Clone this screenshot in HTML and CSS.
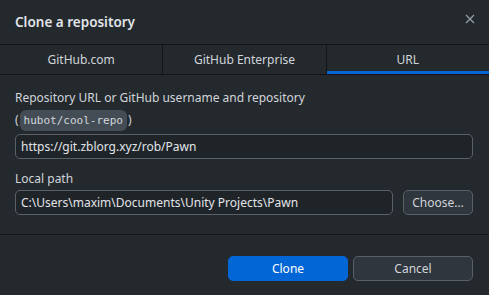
FILE: index.html
```html
<!DOCTYPE html>
<html lang="en">
<head>
    <meta charset="UTF-8">
    <title>Clone a repository</title>
    <link rel="stylesheet" href="styles.css">
</head>
<body>
    <div class="dialog">
        <div class="dialog-header">
            <h1>Clone a repository</h1>
            <button class="close-button" aria-label="Close">
                <svg width="10" height="10" viewBox="0 0 10 10">
                    <path d="M1 1L9 9M9 1L1 9" stroke="#959da5" stroke-width="1.3"/>
                </svg>
            </button>
        </div>
        <div class="tabs">
            <div class="tab">GitHub.com</div>
            <div class="tab">GitHub Enterprise</div>
            <div class="tab selected">URL</div>
        </div>
        <div class="dialog-content">
            <label class="field-label">Repository URL or GitHub username and repository<br>(<code>hubot/cool-repo</code>)</label>
            <input class="text-input" type="text" value="https://git.zblorg.xyz/rob/Pawn">

            <label class="field-label path-label">Local path</label>
            <div class="path-row">
                <input class="text-input" type="text" value="C:\Users\maxim\Documents\Unity Projects\Pawn">
                <button class="button choose">Choose…</button>
            </div>
        </div>
        <div class="dialog-footer">
            <button class="button primary">Clone</button>
            <button class="button">Cancel</button>
        </div>
    </div>
</body>
</html>
```

FILE: styles.css
```css
body {
    margin: 0;
    background-color: #24292e;
    font-family: "Noto Sans", "Open Sans", sans-serif;
    font-size: 12px;
    color: #d1d5da;
}
.dialog {
    width: 489px;
    height: 295px;
    display: flex;
    flex-direction: column;
}
.dialog-header {
    height: 44px;
    display: flex;
    align-items: center;
    justify-content: space-between;
    padding: 0 10px 0 15px;
    border-bottom: 1px solid #141414;
}
.dialog-header h1 {
    margin: 0;
    font-size: 13.5px;
    font-weight: 600;
    color: #e1e4e8;
}
.close-button {
    background: none;
    border: none;
    padding: 4px;
    display: flex;
    margin-top: -6px;
}
.tabs {
    display: flex;
    height: 29px;
    border-bottom: 1px solid #141414;
}
.tab {
    flex: 1;
    display: flex;
    align-items: center;
    justify-content: center;
    border-right: 1px solid #141414;
    color: #d1d5da;
}
.tab:last-child {
    border-right: none;
}
.tab.selected {
    box-shadow: inset 0 -3px 0 #0366d6;
}
.dialog-content {
    padding: 12px 16px 0 15px;
    display: flex;
    flex-direction: column;
    height: 147px;
    border-bottom: 1px solid #141414;
}
.field-label {
    line-height: 22px;
    margin-bottom: 2px;
}
.field-label code {
    font-family: "DejaVu Sans Mono", monospace;
    font-size: 11px;
    background-color: #444d56;
    border-radius: 6px;
    padding: 4px 4px;
    margin: 0 1px;
}
.path-label {
    margin-top: 9px;
    margin-bottom: 0;
}
.text-input {
    height: 25px;
    box-sizing: border-box;
    background-color: #1f2428;
    border: 1px solid #5a6068;
    border-radius: 5px;
    color: #e1e4e8;
    font-family: inherit;
    font-size: 12px;
    padding: 0 5px;
    outline: none;
}
.path-row {
    display: flex;
    gap: 10px;
}
.path-row .text-input {
    flex: 1;
}
.button {
    height: 25px;
    box-sizing: border-box;
    background-color: #2f363d;
    border: 1px solid #5a6068;
    border-radius: 5px;
    color: #d1d5da;
    font-family: inherit;
    font-size: 12px;
    padding: 0 10px;
}
.button.choose {
    width: 70px;
    padding: 0;
}
.dialog-footer {
    display: flex;
    justify-content: flex-end;
    gap: 5px;
    padding: 21px 16px 0 0;
}
.dialog-footer .button {
    width: 120px;
}
.button.primary {
    background-color: #0366d6;
    border-color: #0366d6;
    color: #ffffff;
}
```
